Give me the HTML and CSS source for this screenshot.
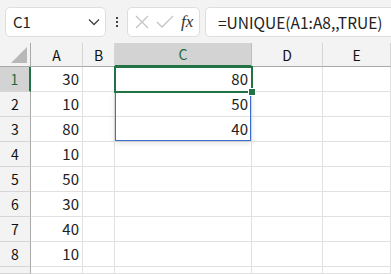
FILE: index.html
```html
<!DOCTYPE html>
<html lang="ja">
<head>
    <meta charset="UTF-8">
    <title>UNIQUE</title>
    <link rel="stylesheet" href="styles.css">
</head>
<body>
    <!-- Formula bar -->
    <div class="toolbar">
        <div class="namebox">
            <span>C1</span>
            <svg class="chevron" width="12" height="8" viewBox="0 0 12 8"><path d="M1 1.5 L6 6.5 L11 1.5" fill="none" stroke="#444" stroke-width="1.3"/></svg>
        </div>
        <div class="dots"><i></i><i></i><i></i></div>
        <div class="fxbox">
            <svg width="18" height="18" viewBox="0 0 18 18"><path d="M3 3 L15 15 M15 3 L3 15" stroke="#c4c4c4" stroke-width="1.3" fill="none"/></svg>
            <svg width="20" height="18" viewBox="0 0 20 18"><path d="M2 9 L7 14 L18 3" stroke="#c4c4c4" stroke-width="1.3" fill="none"/></svg>
            <span class="fx">fx</span>
        </div>
        <div class="formula">=UNIQUE(A1:A8,,TRUE)</div>
    </div>

    <!-- Sheet -->
    <div class="sheet">
        <div class="corner"><span class="tri"></span></div>
        <div class="colhead">A</div>
        <div class="colhead">B</div>
        <div class="colhead active">C</div>
        <div class="colhead">D</div>
        <div class="colhead">E</div>

        <div class="rowhead active">1</div><div class="cell">30</div><div class="cell"></div><div class="cell">80</div><div class="cell"></div><div class="cell"></div>
        <div class="rowhead">2</div><div class="cell">10</div><div class="cell"></div><div class="cell">50</div><div class="cell"></div><div class="cell"></div>
        <div class="rowhead">3</div><div class="cell">80</div><div class="cell"></div><div class="cell">40</div><div class="cell"></div><div class="cell"></div>
        <div class="rowhead">4</div><div class="cell">10</div><div class="cell"></div><div class="cell"></div><div class="cell"></div><div class="cell"></div>
        <div class="rowhead">5</div><div class="cell">50</div><div class="cell"></div><div class="cell"></div><div class="cell"></div><div class="cell"></div>
        <div class="rowhead">6</div><div class="cell">30</div><div class="cell"></div><div class="cell"></div><div class="cell"></div><div class="cell"></div>
        <div class="rowhead">7</div><div class="cell">40</div><div class="cell"></div><div class="cell"></div><div class="cell"></div><div class="cell"></div>
        <div class="rowhead">8</div><div class="cell">10</div><div class="cell"></div><div class="cell"></div><div class="cell"></div><div class="cell"></div>
        <div class="rowhead"></div><div class="cell"></div><div class="cell"></div><div class="cell"></div><div class="cell"></div><div class="cell"></div>

        <!-- spill range and active cell -->
        <div class="spill"></div>
        <div class="active-cell"><span class="handle"></span></div>
    </div>
</body>
</html>
```

FILE: styles.css
```css
html,
body {
    height: 274px;
}

body {
    margin: 0;
    background-color: #f3f3f3;
    font-family: "Noto Sans CJK JP", "Noto Sans", sans-serif;
    color: #222;
    overflow: hidden;
}

.toolbar {
    display: flex;
    align-items: center;
    height: 43px;
    padding: 0 0 0 5px;
    box-sizing: border-box;
}

.namebox,
.fxbox,
.formula {
    height: 30px;
    box-sizing: border-box;
    background-color: white;
    border: 1px solid #dedede;
    border-radius: 5px;
    display: flex;
    align-items: center;
}

.namebox {
    width: 101px;
    padding: 0 5px 0 7px;
    justify-content: space-between;
    font-size: 15px;
}

.dots {
    width: 21px;
    display: flex;
    flex-direction: column;
    align-items: center;
    gap: 2px;
}

.dots i {
    width: 2px;
    height: 2px;
    background-color: #444;
}

.fxbox {
    width: 73px;
    padding: 0 4px 0 5px;
    gap: 4px;
}

.fx {
    font-family: "Liberation Serif", serif;
    font-style: italic;
    font-size: 17px;
    color: #333;
    margin-left: 2px;
}

.formula {
    flex: 1;
    margin-left: 5px;
    margin-right: -6px;
    padding-left: 12px;
    font-size: 15.5px;
    border-right: none;
}

.sheet {
    position: relative;
    display: grid;
    grid-template-columns: 31px 52px 32px 137px 71px 68px;
    grid-template-rows: 24px repeat(8, 25px) 7px;
    background-color: white;
    font-size: 15px;
    overflow: hidden;
}

.corner {
    background-color: #f3f3f3;
    border-right: 1px solid #a9a9a9;
    border-bottom: 1px solid #a9a9a9;
    position: relative;
}

.tri {
    position: absolute;
    right: 3px;
    bottom: 3px;
    width: 0;
    height: 0;
    border-left: 16px solid transparent;
    border-bottom: 16px solid #b8b8b8;
}

.colhead {
    background-color: #f3f3f3;
    border-right: 1px solid #d6d6d6;
    border-bottom: 1px solid #a9a9a9;
    display: flex;
    align-items: center;
    justify-content: center;
    font-size: 14px;
    color: #111;
}

.colhead.active {
    background-color: #d3d3d3;
    color: #1e6b40;
    border-bottom: 2px solid #217346;
    border-right-color: #bdbdbd;
}

.rowhead {
    background-color: #f3f3f3;
    border-right: 1px solid #a9a9a9;
    border-bottom: 1px solid #d6d6d6;
    display: flex;
    align-items: center;
    justify-content: center;
    font-size: 14px;
    color: #111;
}

.rowhead.active {
    background-color: #d3d3d3;
    color: #1e6b40;
    border-right: 2px solid #217346;
}

.cell {
    border-right: 1px solid #e1e1e1;
    border-bottom: 1px solid #e1e1e1;
    text-align: right;
    padding-right: 3px;
    line-height: 24px;
}

.spill {
    position: absolute;
    left: 115px;
    top: 48px;
    width: 136px;
    height: 50px;
    border: 1px solid #3a6fd0;
    box-sizing: border-box;
    box-shadow: 0 2px 6px rgba(0, 0, 0, 0.12);
}

.active-cell {
    position: absolute;
    left: 114px;
    top: 23px;
    width: 139px;
    height: 27px;
    border: 2px solid #217346;
    box-sizing: border-box;
}

.handle {
    position: absolute;
    right: -5px;
    bottom: -5px;
    width: 6px;
    height: 6px;
    background-color: #217346;
    border: 1px solid white;
}
```
